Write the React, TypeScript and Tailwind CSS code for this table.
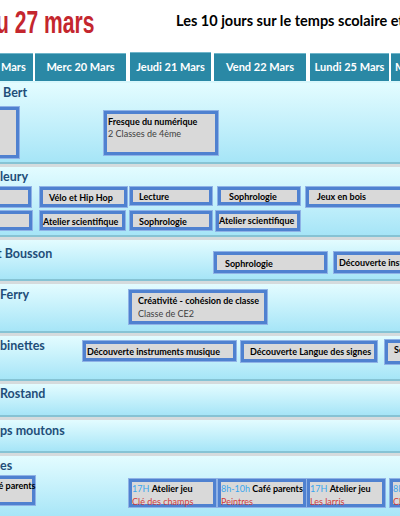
import type { ReactNode } from 'react'

function Box({ className, children }: { className: string; children?: ReactNode }) {
  return (
    <div
      className={`shrink-0 bg-[#d9d9d9] border-[3px] border-[#4f81d0] shadow-[0_0_0_1px_#8fb2e6] text-[9px] font-bold text-black leading-[11px] ${className}`}
    >
      {children}
    </div>
  )
}

function Row({ className, children }: { className: string; children: ReactNode }) {
  return (
    <div className="border-t-[3px] border-[#d5dbdd]">
      <div className={`bg-gradient-to-b from-[#e3fcff] to-[#a6e5f7] border-b-2 border-[#86c3d4] ${className}`}>
        {children}
      </div>
    </div>
  )
}

function Label({ children }: { children: ReactNode }) {
  return <div className="text-[12.5px] font-bold text-[#1f4e79] leading-[16px] whitespace-nowrap">{children}</div>
}

const headers = [
  { label: 'Mars', className: 'w-[33px] text-left pl-[1px]' },
  { label: 'Merc 20 Mars', className: 'w-[91px] ml-[2px] text-center' },
  { label: 'Jeudi 21 Mars', className: 'w-[81px] ml-[4px] -mt-[1px] pt-[6px] text-center' },
  { label: 'Vend 22 Mars', className: 'w-[92px] ml-[3px] text-center' },
  { label: 'Lundi 25 Mars', className: 'w-[79px] ml-[4px] text-center' },
  { label: 'Mardi 26 Mars', className: 'w-[60px] ml-[2px] text-left pl-[4px]' },
]

export default function App() {
  return (
    <div className="w-[400px] h-[516px] overflow-hidden bg-white font-['Lato',sans-serif]">
      {/* Title */}
      <div className="h-[53px] flex items-start whitespace-nowrap">
        <div className="-ml-[4px] w-[100px] shrink-0 mt-[5px]">
          <div className="origin-left scale-x-[0.68] text-[31px] leading-[36px] font-bold text-[#c4262e] font-['Liberation_Sans',sans-serif]">
            u 27 mars
          </div>
        </div>
        <div className="ml-[80px] mt-[12px] text-[14.5px] font-bold text-black leading-[18px]">
          Les 10 jours sur le temps scolaire et hors temps scolaire
        </div>
      </div>

      {/* Days header */}
      <div className="flex h-[28px] whitespace-nowrap">
        {headers.map((h) => (
          <div
            key={h.label}
            className={`shrink-0 bg-[#2a88a5] border-t border-[#6fb5ca] text-white text-[11px] font-bold pt-[5px] overflow-hidden ${h.className}`}
          >
            {h.label}
          </div>
        ))}
      </div>
      <div className="h-[2px] bg-[#d8f7fc]" />

      {/* Row 1 */}
      <div className="bg-gradient-to-b from-[#e3fcff] to-[#a6e5f7] border-b-2 border-[#86c3d4] h-[81px] pt-[2px] pl-[3px]">
        <Label>Bert</Label>
        <div className="flex items-start mt-[6px] -ml-[3px]">
          <Box className="-ml-[10px] w-[29px] h-[51px]" />
          <Box className="ml-[85px] mt-[4px] w-[114px] h-[44px] pl-[1px] pt-[2px]">
            <div>Fresque du numérique</div>
            <div className="font-normal text-[#404040] mt-[1px]">2 Classes de 4ème</div>
          </Box>
        </div>
      </div>

      {/* Row 2 */}
      <Row className="h-[70px] pt-[2px]">
        <Label>leury</Label>
        <div className="flex mt-[2px] h-[20px] whitespace-nowrap">
          <Box className="-ml-[10px] w-[41px] h-[20px]" />
          <Box className="ml-[9px] w-[87px] h-[20px] pl-[6px] pt-[2px]">Vélo et Hip Hop</Box>
          <Box className="ml-[3px] w-[82px] h-[18px] pl-[6px] pt-[1px]">Lecture</Box>
          <Box className="ml-[6px] w-[82px] h-[18px] pl-[8px] pt-[1px]">Sophrologie</Box>
          <Box className="ml-[6px] w-[100px] h-[20px] pl-[8px] pt-[1px]">Jeux en bois</Box>
        </div>
        <div className="flex mt-[4px] h-[20px] whitespace-nowrap">
          <Box className="-ml-[10px] w-[42px] h-[19px]" />
          <Box className="ml-[8px] w-[85px] h-[19px] pt-[2px]">Atelier scientifique</Box>
          <Box className="ml-[5px] w-[82px] h-[19px] pl-[6px] pt-[2px]">Sophrologie</Box>
          <Box className="ml-[4px] w-[84px] h-[20px] pt-[1px]">Atelier scientifique</Box>
        </div>
      </Row>

      {/* Row 3 */}
      <Row className="h-[41px] pt-[6px] flex items-start whitespace-nowrap">
        <div className="w-[217px] shrink-0 -ml-[3px]">
          <Label>t Bousson</Label>
        </div>
        <Box className="mt-[6px] w-[113px] h-[21px] pl-[8px] pt-[3px]">Sophrologie</Box>
        <Box className="ml-[7px] mt-[6px] w-[80px] h-[21px] pl-[2px] pt-[2px]">Découverte instruments musique</Box>
      </Row>

      {/* Row 4 */}
      <Row className="h-[49px] pt-[3px] flex items-start whitespace-nowrap">
        <div className="w-[129px] shrink-0">
          <Label>Ferry</Label>
        </div>
        <Box className="mt-[3px] w-[138px] h-[34px] pl-[6px] pt-[2px]">
          <div>Créativité - cohésion de classe</div>
          <div className="font-normal text-[#404040] mt-[2px]">Classe de CE2</div>
        </Box>
      </Row>

      {/* Row 5 */}
      <Row className="h-[45px] pt-[2px] flex items-start whitespace-nowrap">
        <div className="w-[83px] shrink-0">
          <Label>binettes</Label>
        </div>
        <Box className="mt-[3px] w-[153px] h-[20px] pl-[1px] pt-[2px]">Découverte instruments musique</Box>
        <Box className="ml-[5px] mt-[3px] w-[136px] h-[21px] pl-[6px] pt-[2px]">Découverte Langue des signes</Box>
        <Box className="ml-[8px] mt-[2px] w-[60px] h-[24px] pl-[6px] pt-[1px]">Sophrologie</Box>
      </Row>

      {/* Row 6 */}
      <Row className="h-[33px] pt-[2px]">
        <Label>Rostand</Label>
      </Row>

      {/* Row 7 */}
      <Row className="h-[33px] pt-[3px]">
        <Label>ps moutons</Label>
      </Row>

      {/* Row 8 */}
      <Row className="h-[64px] pt-[2px] whitespace-nowrap">
        <Label>es</Label>
        <div className="flex items-start mt-[2px]">
          <Box className="-ml-[20px] w-[55px] h-[29px] pl-[2px] pt-[1px]">Café parents</Box>
          <Box className="ml-[94px] mt-[3px] w-[87px] h-[28px] pt-[1px] leading-[10px]">
            <div>
              <span className="font-normal text-[#3aa6ee]">17H </span>Atelier jeu
            </div>
            <div className="font-normal text-[#d23c3c] mt-[2px]">Clé des champs</div>
          </Box>
          <Box className="ml-[2px] mt-[3px] w-[88px] h-[28px] pt-[1px] leading-[10px]">
            <div>
              <span className="font-normal text-[#3aa6ee]">8h-10h </span>Café parents
            </div>
            <div className="font-normal text-[#d23c3c] mt-[2px]">Peintres</div>
          </Box>
          <Box className="ml-[1px] mt-[3px] w-[78px] h-[28px] pt-[1px] leading-[10px]">
            <div>
              <span className="font-normal text-[#3aa6ee]">17H </span>Atelier jeu
            </div>
            <div className="font-normal text-[#d23c3c] mt-[2px]">Les larris</div>
          </Box>
          <Box className="ml-[5px] mt-[3px] w-[60px] h-[28px] pt-[1px] leading-[10px]">
            <div>
              <span className="font-normal text-[#3aa6ee]">8H </span>Atelier
            </div>
            <div className="font-normal text-[#d23c3c] mt-[2px]">Champs</div>
          </Box>
        </div>
      </Row>
    </div>
  )
}
